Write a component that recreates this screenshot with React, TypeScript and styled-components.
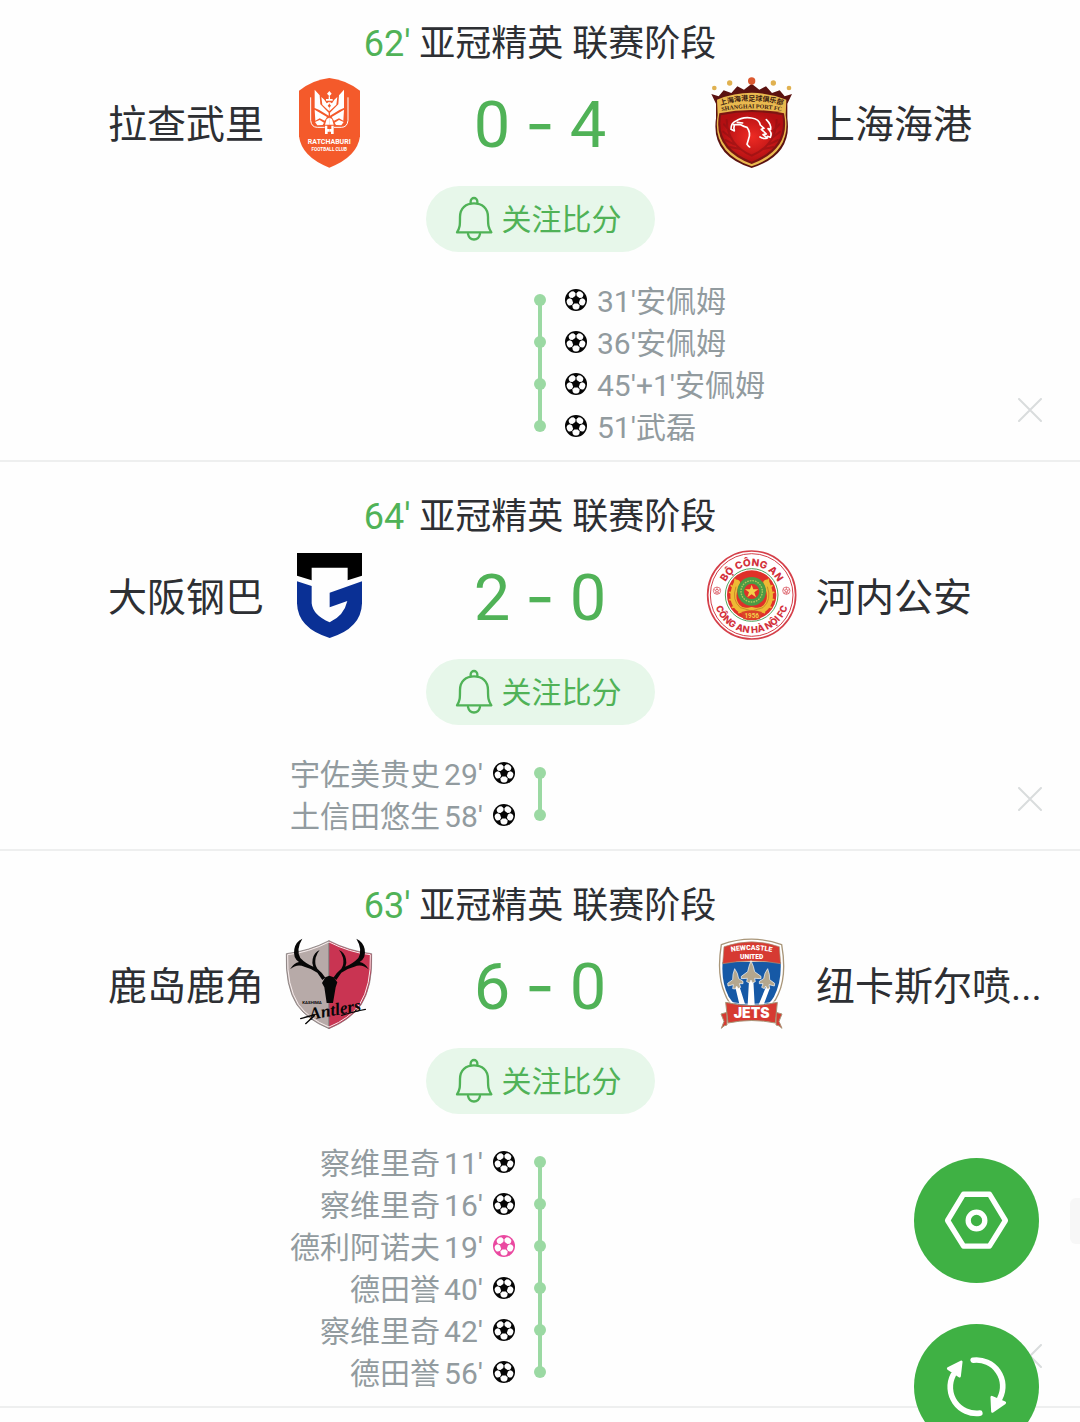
import React from "react";
import styled, { createGlobalStyle } from "styled-components";

const sans = `Roboto, "Noto Sans CJK SC", sans-serif`;

const GlobalStyle = createGlobalStyle`
  *, *::before, *::after { box-sizing: border-box; }
  body { margin: 0; background: #fefefe; font-family: ${sans}; color: #2d2f33; }
  ul { margin: 0; padding: 0; list-style: none; }
  button { border: 0; padding: 0; font-family: inherit; cursor: pointer; }
`;

const Match = styled.section<{ $first?: boolean }>`
  display: flex;
  flex-direction: column;
  align-items: center;
  padding: ${(p) => (p.$first ? 18 : 29)}px 0 13px;
  border-bottom: 2px solid #eeefef;
`;

const Stage = styled.h2`
  margin: 0 0 10px;
  padding-top: 2px;
  font-size: 36px;
  line-height: 48px;
  font-weight: 400;
  white-space: nowrap;
`;

const Minute = styled.span`
  color: #50b257;
`;

const Board = styled.div`
  width: 100%;
  display: grid;
  grid-template-columns: minmax(0, 224fr) 90px minmax(0, 292fr) 90px minmax(0, 224fr);
  column-gap: 20px;
  align-items: center;
  padding: 0 40px;
  margin-bottom: 18px;
`;

const Team = styled.span<{ $side: "home" | "away" }>`
  padding-top: 4px;
  font-size: 39px;
  line-height: 54px;
  text-align: ${(p) => (p.$side === "home" ? "right" : "left")};
  white-space: nowrap;
`;

const Crest = styled.svg`
  display: block;
  width: 90px;
  height: 90px;
  overflow: visible;
`;

const Score = styled.div`
  display: grid;
  grid-template-columns: repeat(3, 48px);
  justify-content: center;
  justify-items: center;
  align-items: baseline;
  padding-top: 4px;
  color: #50b257;
  font-size: 65px;
  line-height: 80px;
  font-weight: 400;
`;

const Dash = styled.span`
  font-family: Inter, sans-serif;
  line-height: 60px;
`;

const Follow = styled.button`
  display: flex;
  align-items: center;
  gap: 8px;
  height: 66px;
  padding: 0 33px 0 28px;
  margin-bottom: 27px;
  border-radius: 33px;
  background: #e7f7ea;
  color: #50b257;
  font-size: 30px;
`;

const FollowLabel = styled.span`
  padding-top: 2px;
  line-height: 40px;
`;

const BellSvg = styled.svg`
  width: 40px;
  height: 48px;
`;

const Events = styled.div`
  width: 100%;
  display: grid;
  grid-template-columns: minmax(0, 1fr) 12px minmax(0, 1fr);
  column-gap: 19px;
`;

const Goals = styled.ul<{ $side: "home" | "away" }>`
  display: flex;
  flex-direction: column;
  align-items: ${(p) => (p.$side === "home" ? "flex-end" : "flex-start")};
`;

const Goal = styled.li`
  display: flex;
  align-items: center;
  gap: 10px;
  color: #929b9f;
  font-size: 30px;
  white-space: nowrap;
`;

const Scorer = styled.span`
  display: flex;
  padding-top: 4px;
  line-height: 38px;
`;

const HomeScorer = styled(Scorer)`
  gap: 4px;
`;

const BallSvg = styled.svg`
  width: 22px;
  height: 22px;
`;

const Timeline = styled.div`
  display: flex;
  flex-direction: column;
  align-items: center;
  padding: 15px 0;
`;

const Dot = styled.span`
  width: 12px;
  height: 12px;
  border-radius: 50%;
  background: #9bd9a3;
`;

const Link = styled.span`
  width: 4px;
  height: 34px;
  margin: -2px 0;
  background: #9bd9a3;
`;

const AwaySide = styled.div`
  display: flex;
  justify-content: space-between;
  padding-right: 38px;
`;

const Close = styled.button`
  align-self: flex-end;
  width: 24px;
  height: 24px;
  margin: 0 0 25px auto;
  background: none;
  color: #d9dcdd;

  svg { display: block; width: 24px; height: 24px; }
`;

const Floating = styled.div`
  position: fixed;
  right: 41px;
  bottom: -27px;
  display: flex;
  flex-direction: column;
  gap: 41px;
`;

const RoundButton = styled.button`
  width: 125px;
  height: 125px;
  border-radius: 50%;
  background: #3fb144;
  color: #fff;

  svg { display: block; width: 125px; height: 125px; }
`;

const EdgeTab = styled.div`
  position: fixed;
  right: 0;
  bottom: 178px;
  width: 10px;
  height: 46px;
  border-radius: 6px 0 0 6px;
  background: #f7f7f7;
`;

const Bell = () => (
  <BellSvg viewBox="102 45 120 144" fill="none" stroke="currentColor" strokeWidth="7" strokeLinejoin="round" strokeLinecap="round" aria-hidden="true">
    <path d="M111 157C120 143 120 136 120 111C120 84 138 70 162 70C186 70 204 84 204 111C204 136 205 143 214 157Z" />
    <path d="M152 70V64A10 10 0 0 1 172 64V70" />
    <path d="M144 162C149 184 175 184 180 162" />
  </BellSvg>
);

const Ball = ({ color = "#050505" }: { color?: string }) => (
  <BallSvg viewBox="-11 -11 22 22" aria-hidden="true">
    <circle r="11" fill={color} />
    {[18, 90, 162, 234, 306].map((a) => (
      <path key={a} transform={`rotate(${a})`} fill="#fefefe" d="M3.6 -1.7L5.2 -3.4Q7 -3.9 8.6 -2.9L9.5 -1.2V1.2L8.6 2.9Q7 3.9 5.2 3.4L3.6 1.7Z" />
    ))}
  </BallSvg>
);

const DragonHalf = ({ mirrored = false }: { mirrored?: boolean }) => (
  <g fill="#fff" transform={mirrored ? "translate(296 0) scale(-1 1)" : undefined}>
    <path d="M104 74L119 91L121 118L146 143V152L118 135L104 129Z" />
    <path d="M124 96L133 104L140 115L148 110V139L127 119Z" />
    <path d="M104 134L141 156L134 167L119 160L106 167Z" />
    <path d="M105 171L119 165L132 173L128 180L112 181Z" />
    <path d="M140 162L148 158V179H135Z" />
    <path d="M135 182H142V192H148V200H143V207H135Z" />
    <path fill="none" stroke="#fff" strokeWidth="3" d="M92 97V166Q94 187 112 187H134" />
  </g>
);

const Ratchaburi = () => (
  <Crest viewBox="12 39 270 270" role="img" aria-label="拉查武里">
    <path fill="#f45a2b" d="M57 77Q100 44 148 39Q196 44 240 77V214Q232 276 148 308Q65 276 57 214Z" />
    <DragonHalf />
    <DragonHalf mirrored />
    <path fill="#fff" d="M148 78L155 86L148 94L141 86Z" />
    <path fill="#f45a2b" d="M148 116L153 122L148 128L143 122Z" />
    <path fill="#fff" d="M146 94H150V102H158V107H138V102H146Z" />
    <g fill="#fff" fontFamily="Roboto" textAnchor="middle" fontWeight="700">
      <text x="148" y="238" fontSize="21">RATCHABURI</text>
      <text x="148" y="257" fontSize="14">FOOTBALL CLUB</text>
    </g>
  </Crest>
);

const ShanghaiPort = () => (
  <Crest viewBox="18 39 270 270" role="img" aria-label="上海海港">
    <defs>
      <radialGradient id="portRed">
        <stop offset="0" stopColor="#ee2b24" />
        <stop offset="1" stopColor="#b30f12" />
      </radialGradient>
      <path id="portTop" d="M58 122Q155 92 252 122" />
      <path id="portSub" d="M58 140Q155 119 252 140" />
    </defs>
    <path fill="#5b1210" d="M34 87L56 94L71 76L94 84L112 64L132 74L155 56L178 74L198 64L216 84L239 76L254 94L276 87L262 116V160Q278 270 155 309Q32 270 48 160V116Z" />
    <path fill="#e9b94f" d="M51 104Q155 63 259 104L257 150Q276 262 155 304Q34 262 53 150Z" />
    <path fill="#7d1512" d="M58 145Q155 125 252 145Q274 252 155 297Q36 252 58 145Z" />
    <path fill="url(#portRed)" d="M63 151Q155 131 247 151Q263 248 155 290Q47 248 63 151Z" />
    <g fill="none" stroke="#8f1013" strokeWidth="6" strokeLinecap="round" opacity=".6">
      <path d="M72 178L90 198M70 200L95 220M76 225L103 238M90 246L120 252M238 178L220 198M240 200L215 220M234 225L207 238M220 246L190 252M80 165Q82 240 155 272Q228 240 230 165" />
    </g>
    <g fill="#e0b150">
      <circle cx="43" cy="69" r="7" />
      <circle cx="89" cy="54" r="8" />
      <circle cx="220" cy="54" r="8" />
      <circle cx="267" cy="69" r="7" />
    </g>
    <circle cx="155" cy="48" r="11" fill="#dc5930" />
    <g fill="#3c2011" textAnchor="middle">
      <text fontFamily="Noto Sans CJK SC" fontWeight="700" fontSize="21"><textPath href="#portTop" startOffset="50%">上海海港足球俱乐部</textPath></text>
      <text fontFamily="Liberation Serif" fontWeight="700" fontSize="18"><textPath href="#portSub" startOffset="50%">SHANGHAI PORT FC</textPath></text>
    </g>
    <g fill="none" stroke="#fff" strokeWidth="5" strokeLinecap="round" strokeLinejoin="round">
      <path d="M102 197L93 193Q93 175 106 169Q128 154 155 159Q178 162 181 180L192 190L184 193L199 207L189 209L202 219Q191 223 180 216" />
      <path d="M101 179H122Q132 185 141 187Q153 204 146 221L141 238Q146 245 149 246" />
      <path d="M103 181Q100 191 103 197M112 172L128 174" />
      <path d="M199 164Q214 178 212 193L204 191Q218 204 211 217L202 214" />
    </g>
  </Crest>
);

const GambaOsaka = () => (
  <Crest viewBox="12 33 270 270" role="img" aria-label="大阪钢巴">
    <path fill="#000" d="M51 39H246V107L203 121V83H95V121L51 107Z" />
    <path fill="#0a3095" d="M51 124L95 138V190Q99 226 149 247Q192 227 202 183L149 202V158L246 124V190Q244 265 149 294Q53 265 51 190Z" />
  </Crest>
);

const CongAnHaNoi = () => (
  <Crest viewBox="18 33 270 270" role="img" aria-label="河内公安">
    <defs>
      <path id="hnTop" d="M68 165A87 87 0 0 1 242 165" />
      <path id="hnBottom" d="M41 165A114 114 0 0 0 269 165" />
    </defs>
    <circle cx="155" cy="165" r="132" fill="#fff" stroke="#d5404a" strokeWidth="5" />
    <circle cx="155" cy="165" r="124" fill="none" stroke="#d5404a" strokeWidth="3" />
    <circle cx="155" cy="165" r="79" fill="#fff" stroke="#50a25b" strokeWidth="3" />
    <circle cx="155" cy="165" r="74" fill="#df3029" />
    <g fill="none" stroke="#efba35" strokeLinecap="round">
      <path strokeWidth="18" d="M111 128Q89 174 112 201Q127 218 153 210M199 128Q221 174 198 201Q183 218 157 210" />
      <path strokeWidth="5" d="M105 118V133M94 137L105 148M89 157L105 164M89 179L105 180M97 202L112 198M205 118V133M216 137L205 148M221 157L205 164M221 179L205 180M213 202L198 198M117 218L130 206M193 218L180 206" />
    </g>
    <path fill="none" stroke="#b37423" strokeWidth="2" d="M108 140Q94 180 121 203M202 140Q216 180 189 203M121 203L149 211M189 203L161 211" />
    <circle cx="155" cy="154" r="43" fill="#4b9b45" />
    <circle cx="155" cy="154" r="32" fill="none" stroke="#b2c65d" strokeWidth="4" strokeDasharray="5 3" />
    <circle cx="155" cy="154" r="23" fill="#df3029" />
    <path fill="#f4d04a" d="M155 134L160 148H175L163 157L168 172L155 163L142 172L147 157L135 148H150Z" />
    <path fill="#db4228" d="M124 216Q155 206 186 216L180 237Q155 245 130 237Z" />
    <g fontFamily="Roboto" fontWeight="700" textAnchor="middle">
      <text x="155" y="235" fontSize="19" fill="#f4d04a">1956</text>
      <g fill="#d3313c" fontFamily="Inter" fontWeight="800">
        <text fontSize="30"><textPath href="#hnTop" startOffset="50%">BỘ CÔNG AN</textPath></text>
        <text fontSize="28"><textPath href="#hnBottom" startOffset="50%">CÔNG AN HÀ NỘI FC</textPath></text>
      </g>
    </g>
    {[51, 259].map((x) => (
      <g key={x} fill="none" stroke="#d5404a" strokeWidth="2">
        <circle cx={x} cy="152" r="11" />
        <circle cx={x} cy="152" r="4" />
        <path d={`M${x} 141V148M${x} 156V163M${x - 10} 149L${x - 4} 151M${x + 10} 149L${x + 4} 151M${x - 6} 161L${x - 3} 155M${x + 6} 161L${x + 3} 155`} />
      </g>
    ))}
  </Crest>
);

const KashimaAntlers = () => (
  <Crest viewBox="27 45 270 270" role="img" aria-label="鹿岛鹿角">
    <path fill="#b7aaa8" stroke="#706766" strokeWidth="2" d="M162 47Q102 78 34 86Q30 184 66 240Q98 285 162 311Z" />
    <path fill="#c93452" stroke="#777" strokeWidth="2" d="M162 47Q222 78 290 86Q294 184 258 240Q226 285 162 311Z" />
    <path fill="none" stroke="#f8eeee" strokeWidth="3" d="M162 51Q102 82 38 89Q35 182 70 238Q101 281 162 306Q223 281 254 238Q289 182 286 89Q222 82 162 51" />
    <g fill="#070707">
      <path d="M82 41Q62 50 58 72Q53 99 72 111Q57 113 45 133Q66 115 88 125Q109 130 127 143L142 165L151 158Q142 143 127 131Q118 118 122 98Q126 84 134 75Q117 82 113 102Q110 115 115 125Q92 116 76 99Q62 74 82 41Z" />
      <path d="M244 41Q264 50 269 72Q274 99 254 111Q270 113 281 133Q260 115 238 125Q217 130 199 143L184 165L175 158Q184 143 199 131Q208 118 204 98Q200 84 192 75Q209 82 213 102Q216 115 211 125Q234 116 250 99Q264 74 244 41Z" />
      <path d="M151 157L163 152L176 157L187 172L182 187L174 234H155L148 187L141 174Z" />
      <text x="82" y="236" fontFamily="Roboto" fontWeight="700" fontSize="13">KASHIMA</text>
      <text transform="rotate(-10 106 284)" x="106" y="284" fontFamily="Liberation Serif, serif" fontStyle="italic" fontWeight="700" fontSize="52">Antlers</text>
    </g>
    <path fill="none" stroke="#080808" strokeWidth="4" strokeLinecap="round" d="M77 281Q100 274 118 270M200 271Q240 259 271 253M92 296L118 272" />
  </Crest>
);

const NewcastleJets = () => (
  <Crest viewBox="3 45 270 270" role="img" aria-label="纽卡斯尔喷...">
    <defs><path id="jetsTop" d="M59 85Q140 65 221 85" /></defs>
    <path fill="#fff" stroke="#a99679" strokeWidth="4" d="M49 59Q140 26 230 59Q246 150 220 207Q200 258 139 272Q78 258 60 207Q34 150 49 59Z" />
    <path fill="#1659a6" d="M53 111H227Q230 170 207 215Q188 249 139 261Q90 249 71 215Q48 170 53 111Z" />
    <path fill="#d63a32" stroke="#a99679" strokeWidth="2" d="M57 65Q140 36 223 65L227 116Q140 100 53 116Z" />
    <g fontFamily="Roboto" fontWeight="900" textAnchor="middle" fill="#fff">
      <text fontSize="21"><textPath href="#jetsTop" startOffset="50%">NEWCASTLE</textPath></text>
      <text x="140" y="102" fontSize="20">UNITED</text>
    </g>
    <g fill="#fff">
      <path d="M132 166H145L149 240H128ZM91 187L103 183L120 237H103ZM184 183L195 188L176 239H161Z" />
    </g>
    <g fill="#b4a78e" stroke="#fff" strokeWidth="2" strokeLinejoin="round">
      <path d="M138 107L145 124L149 140L168 154V161L149 160L151 170L142 174L138 165L134 174L125 170L127 160L109 161V154L128 140L132 124Z" />
      <path d="M89 131L97 145L101 161L114 169V176L103 176L107 187L99 191L95 183L91 192L83 191L85 179L69 183L68 175L83 164L84 148Z" />
      <path d="M188 131L193 148L194 164L209 175L208 183L192 179L194 191L186 192L182 183L178 191L170 187L174 176L163 176V169L176 161L180 145Z" />
    </g>
    <path fill="#d63a32" stroke="#a99679" strokeWidth="3" strokeLinejoin="round" d="M48 267L66 262V300Q58 300 49 310L57 289ZM231 267L213 262V300Q222 300 231 310L222 289Z" />
    <path fill="#d63a32" stroke="#a99679" strokeWidth="3" strokeLinejoin="round" d="M62 232Q140 251 217 232L211 294Q140 279 69 294Z" />
    <path fill="none" stroke="#fff" strokeWidth="2" d="M65 229Q140 247 214 229" />
    <text x="140" y="279" textAnchor="middle" fontFamily="Inter" fontWeight="900" fontSize="42" fill="#fff">JETS</text>
  </Crest>
);

type GoalEvent = { name: string; time: string; color?: string };

type MatchData = {
  minute: string;
  home: string;
  away: string;
  score: [number, number];
  side: "home" | "away";
  goals: GoalEvent[];
  HomeCrest: React.FC;
  AwayCrest: React.FC;
};

const matches: MatchData[] = [
  {
    minute: "62'", home: "拉查武里", away: "上海海港", score: [0, 4], side: "away",
    HomeCrest: Ratchaburi, AwayCrest: ShanghaiPort,
    goals: [
      { time: "31'", name: "安佩姆" },
      { time: "36'", name: "安佩姆" },
      { time: "45'+1'", name: "安佩姆" },
      { time: "51'", name: "武磊" },
    ],
  },
  {
    minute: "64'", home: "大阪钢巴", away: "河内公安", score: [2, 0], side: "home",
    HomeCrest: GambaOsaka, AwayCrest: CongAnHaNoi,
    goals: [
      { time: "29'", name: "宇佐美贵史" },
      { time: "58'", name: "土信田悠生" },
    ],
  },
  {
    minute: "63'", home: "鹿岛鹿角", away: "纽卡斯尔喷...", score: [6, 0], side: "home",
    HomeCrest: KashimaAntlers, AwayCrest: NewcastleJets,
    goals: [
      { time: "11'", name: "察维里奇" },
      { time: "16'", name: "察维里奇" },
      { time: "19'", name: "德利阿诺夫", color: "#ea48a0" },
      { time: "40'", name: "德田誉" },
      { time: "42'", name: "察维里奇" },
      { time: "56'", name: "德田誉" },
    ],
  },
];

const MatchCard = ({ match, first }: { match: MatchData; first: boolean }) => {
  const { HomeCrest, AwayCrest, goals, side } = match;
  return (
    <Match $first={first}>
      <Stage><Minute>{match.minute}</Minute> 亚冠精英 联赛阶段</Stage>
      <Board>
        <Team $side="home">{match.home}</Team>
        <HomeCrest />
        <Score>
          <span>{match.score[0]}</span>
          <Dash>-</Dash>
          <span>{match.score[1]}</span>
        </Score>
        <AwayCrest />
        <Team $side="away">{match.away}</Team>
      </Board>
      <Follow type="button"><Bell /><FollowLabel>关注比分</FollowLabel></Follow>
      <Events>
        <Goals $side="home">
          {side === "home" && goals.map((g) => (
            <Goal key={g.time}>
              <HomeScorer><span>{g.name}</span><span>{g.time}</span></HomeScorer>
              <Ball color={g.color} />
            </Goal>
          ))}
        </Goals>
        <Timeline>
          {goals.map((g, i) => (
            <React.Fragment key={g.time}>
              {i > 0 && <Link />}
              <Dot />
            </React.Fragment>
          ))}
        </Timeline>
        <AwaySide>
          <Goals $side="away">
            {side === "away" && goals.map((g) => (
              <Goal key={g.time}>
                <Ball color={g.color} />
                <Scorer>{g.time}{g.name}</Scorer>
              </Goal>
            ))}
          </Goals>
          <Close type="button" aria-label="关闭">
            <svg viewBox="0 0 24 24" fill="none" stroke="currentColor" strokeWidth="2" strokeLinecap="round">
              <path d="M1 1L23 23M23 1L1 23" />
            </svg>
          </Close>
        </AwaySide>
      </Events>
    </Match>
  );
};

export default function App() {
  return (
    <>
      <GlobalStyle />
      <main>
        {matches.map((m, i) => <MatchCard key={m.home} match={m} first={i === 0} />)}
      </main>
      <EdgeTab />
      <Floating>
        <RoundButton type="button" aria-label="设置">
          <svg viewBox="72 52 376 376" fill="none" stroke="currentColor" strokeWidth="16" strokeLinejoin="round">
            <path d="M173 240L221 161H299L347 240L299 317H221Z" />
            <circle cx="260" cy="240" r="25" />
          </svg>
        </RoundButton>
        <RoundButton type="button" aria-label="刷新">
          <svg viewBox="72 552 376 376" fill="none" stroke="currentColor" strokeWidth="17" strokeLinecap="round" strokeLinejoin="round">
            <path d="M250 661A79 79 0 0 1 330 776" />
            <path d="M270 820A79 79 0 0 1 190 705" />
            <path d="M306 772L345 789L308 815ZM175 686L214 666L209 709Z" fill="currentColor" strokeWidth="8" />
          </svg>
        </RoundButton>
      </Floating>
    </>
  );
}
